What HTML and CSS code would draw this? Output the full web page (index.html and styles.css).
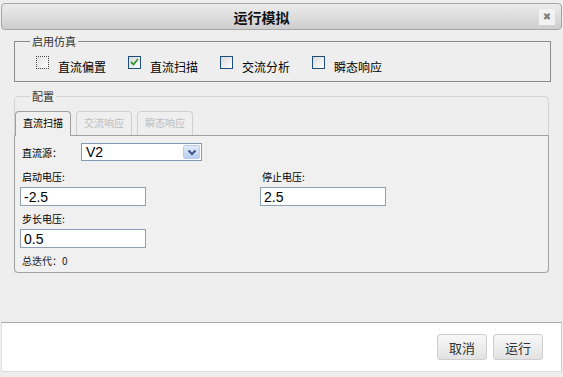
FILE: index.html
```html
<!DOCTYPE html>
<html lang="zh">
<head>
    <meta charset="UTF-8">
    <title>运行模拟</title>
    <link rel="stylesheet" href="styles.css">
</head>
<body>
    <div class="dialog">
        <div class="titlebar">
            <span class="title">运行模拟</span>
            <span class="close-wrap"><span class="close">&#x2716;</span></span>
        </div>

        <div class="content">
            <fieldset class="enable">
                <legend>启用仿真</legend>
                <div class="checks">
                    <label class="check"><span class="box focus"></span>直流偏置</label>
                    <label class="check"><span class="box">
                        <svg width="9" height="8" viewBox="0 0 9 8"><path d="M1 4 L3.5 6.5 L8 1" fill="none" stroke="#2f9a2f" stroke-width="1.8"/></svg>
                    </span>直流扫描</label>
                    <label class="check"><span class="box"></span>交流分析</label>
                    <label class="check"><span class="box"></span>瞬态响应</label>
                </div>
            </fieldset>

            <fieldset class="config">
                <legend>配置</legend>
                <div class="tabs">
                    <span class="tab active">直流扫描</span>
                    <span class="tab">交流响应</span>
                    <span class="tab">瞬态响应</span>
                </div>
                <div class="panel">
                    <div class="src-row">
                        <span class="src-label">直流源：</span>
                        <div class="select">
                            <span class="select-value">V2</span>
                            <span class="arrow">
                                <svg width="10" height="7" viewBox="0 0 10 7"><path d="M1.5 1.5 L5 5 L8.5 1.5" fill="none" stroke="#3d5a8a" stroke-width="2"/></svg>
                            </span>
                        </div>
                    </div>
                    <div class="fields">
                        <div class="field">
                            <label>启动电压:</label>
                            <input type="text" value="-2.5">
                        </div>
                        <div class="field">
                            <label>停止电压:</label>
                            <input type="text" value="2.5">
                        </div>
                        <div class="field">
                            <label>步长电压:</label>
                            <input type="text" value="0.5">
                        </div>
                    </div>
                    <div class="total">总迭代：0</div>
                </div>
            </fieldset>
        </div>

        <div class="footer">
            <button class="btn">取消</button>
            <button class="btn">运行</button>
        </div>
    </div>
</body>
</html>
```

FILE: styles.css
```css
* {
    box-sizing: border-box;
}

body {
    margin: 0;
    background-color: #eeeeee;
    font-family: "Noto Sans CJK SC", "Liberation Sans", sans-serif;
    font-size: 12px;
    color: #000;
}

.dialog {
    width: 563px;
    height: 377px;
    display: flex;
    flex-direction: column;
}

/* title bar */
.titlebar {
    margin: 3px 1px 0 1px;
    height: 27px;
    border: 1px solid #a6a6a6;
    border-radius: 4px;
    background: linear-gradient(#ececec, #cecece);
    display: flex;
    align-items: center;
}

.title {
    flex: 1;
    text-align: center;
    font-weight: bold;
    font-size: 14px;
    color: #111;
}

.close-wrap {
    width: 40px;
    display: flex;
}

.close {
    margin-left: 18px;
    width: 16px;
    height: 16px;
    background-color: #f2f2f2;
    color: #808080;
    font-size: 10px;
    line-height: 16px;
    text-align: center;
    font-family: "DejaVu Sans", sans-serif;
}

/* main area */
.content {
    height: 292px;
    padding: 4px 12px 0 14px;
}

fieldset {
    margin: 0;
    min-width: 0;
}

legend {
    padding: 0 2px;
    font-size: 11px;
    line-height: 14px;
    color: #333;
}

.enable {
    height: 48px;
    padding: 0 0 0 15px;
    border: 1px solid #8c8c8c;
}

.checks {
    display: flex;
    align-items: center;
    height: 32px;
    padding: 4px 0 0 6px;
}

.check {
    display: flex;
    align-items: center;
    gap: 9px;
    margin-right: 22px;
    font-size: 12px;
}

.box {
    width: 13px;
    height: 13px;
    margin-bottom: 8px;
    border: 1px solid #1e4f7a;
    background: linear-gradient(135deg, #d8d8d8, #ffffff);
    display: flex;
    align-items: center;
    justify-content: center;
}

.box.focus {
    border: 1px dotted #444;
    background: linear-gradient(135deg, #e0e0e0, #ffffff);
}

.config {
    margin: 7px 2px 0 0;
    padding: 0;
    border: 1px solid #d2d2d2;
    border-bottom: 0;
    border-radius: 5px 5px 0 0;
}

.config legend {
    margin-left: 15px;
}

/* tabs */
.tabs {
    display: flex;
    gap: 5px;
    padding: 8px 0 0 0;
    height: 32px;
    align-items: flex-end;
}

.tab {
    height: 24px;
    padding: 0 7px;
    border: 1px solid #cfcfcf;
    border-bottom: 0;
    border-radius: 4px 4px 0 0;
    font-size: 10px;
    line-height: 22px;
    color: #bdbdbd;
    background-color: #efefef;
}

.tab.active {
    color: #000;
    border-color: #a0a0a0;
    height: 25px;
    margin-bottom: -1px;
    background-color: #f0f0f0;
    position: relative;
}

.panel {
    margin: 0 -1px;
    height: 138px;
    padding: 7px 4px 0 5px;
    border: 1px solid #a0a0a0;
    border-radius: 0 0 4px 4px;
    background-color: #f0f0f0;
}

.src-row {
    display: flex;
    align-items: center;
    height: 18px;
}

.src-label {
    width: 61px;
    padding-left: 2px;
    font-size: 10px;
}

.select {
    width: 121px;
    height: 18px;
    border: 1px solid #7f9db9;
    background-color: #fff;
    display: flex;
    align-items: center;
    justify-content: space-between;
}

.select-value {
    padding-left: 4px;
    font-family: "Liberation Sans", sans-serif;
    font-size: 14px;
}

.arrow {
    width: 17px;
    height: 14px;
    margin-right: 1px;
    border: 1px solid #b9cbea;
    border-radius: 2px;
    background: linear-gradient(#e3ebf9, #b9cdef);
    display: flex;
    align-items: center;
    justify-content: center;
}

.fields {
    margin-top: 9px;
    display: grid;
    grid-template-columns: 240px 240px;
    row-gap: 6px;
}

.field label {
    display: block;
    height: 14px;
    line-height: 14px;
    padding-left: 2px;
    margin-bottom: 3px;
    font-size: 10px;
}

.field input {
    width: 126px;
    height: 19px;
    margin: 0;
    padding: 0 3px;
    border: 1px solid #8d9fb3;
    font-family: "Liberation Sans", sans-serif;
    font-size: 14px;
    color: #000;
}

.total {
    margin-top: 6px;
    padding-left: 2px;
    line-height: 14px;
    font-size: 10px;
    color: #222;
}

/* footer */
.footer {
    margin: 0 1px;
    height: 50px;
    border-top: 1px solid #a8a8a8;
    border-left: 1px solid #e0e0e0;
    border-right: 1px solid #d0d0d0;
    border-bottom: 1px solid #dcdcdc;
    background-color: #fff;
    display: flex;
    justify-content: flex-end;
    align-items: center;
    gap: 6px;
    padding-right: 18px;
}

.btn {
    width: 50px;
    height: 26px;
    border: 1px solid #cfcfcf;
    border-radius: 3px;
    background: linear-gradient(#f8f8f8, #e2e2e2);
    font-family: "Noto Sans CJK SC", sans-serif;
    font-size: 13px;
    color: #333;
    padding: 0;
}
```
